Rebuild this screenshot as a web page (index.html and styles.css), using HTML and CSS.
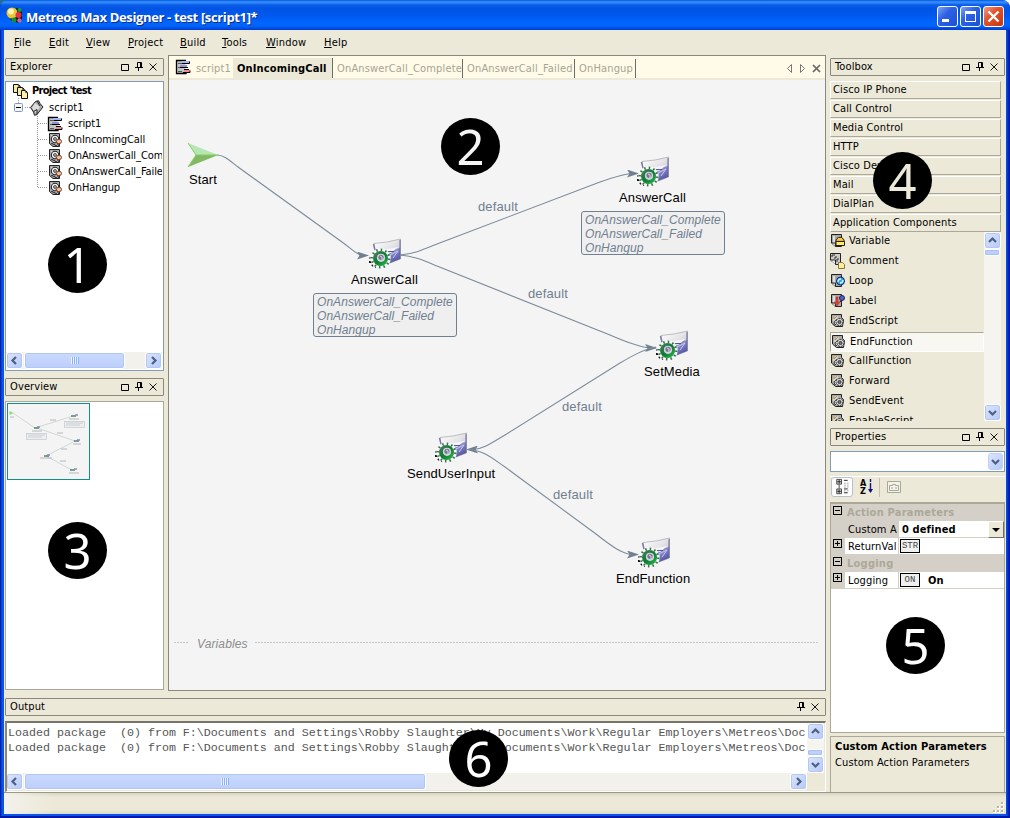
FILE: index.html
```html
<!DOCTYPE html>
<html lang="en">
<head>
<meta charset="utf-8">
<title>Metreos Max Designer - test [script1]*</title>
<link rel="stylesheet" href="styles.css">
</head>
<body>
<svg class="defs" width="0" height="0" aria-hidden="true">
  <defs>
    <linearGradient id="card" x1="0" y1="0" x2="1" y2="1"><stop offset="0" stop-color="#fff"/><stop offset=".5" stop-color="#e4e4e8"/><stop offset="1" stop-color="#aaa"/></linearGradient>
    <linearGradient id="blue" x1="0" y1="0" x2="1" y2="1"><stop offset="0" stop-color="#d5d5f2"/><stop offset=".6" stop-color="#7c7cc4"/><stop offset="1" stop-color="#3f3f92"/></linearGradient>
    <linearGradient id="gear" x1="0" y1="0" x2="1" y2="1"><stop offset="0" stop-color="#4f7f62"/><stop offset=".5" stop-color="#0d7a33"/><stop offset="1" stop-color="#2cc04c"/></linearGradient>
    <symbol id="i-action" viewBox="0 0 34 34">
      <path d="M6 7.500Q20 6.500 32.500 3V23L22 27H8z" fill="url(#card)" stroke="#999" stroke-width=".6"/>
      <path d="M8 16Q20 15.500 32 12V23L22 27 8 24z" fill="url(#blue)"/>
      <path d="M9 14Q22 13 31 10.500L23 17z" fill="#f4f4fb"/><path d="M14 15.500h12" stroke="#55559c"/><path d="M22 19l8-4-5 7" stroke="#c9c9ee" fill="none"/>
      <path d="M32 4V23" fill="none" stroke="#66669a"/>
      <path d="M5.500 8L7.500 16" stroke="#7777aa" stroke-width="1.400"/>
      <path d="M1.500 22h3M1 26h4M4 30l2-2M8 32v-3M12 32l-1-3" stroke="#111" stroke-width="2"/>
      <circle cx="12.500" cy="22.500" r="8.700" fill="none" stroke="#f5fbf5" stroke-width="3.200"/>
      <circle cx="12.500" cy="22.500" r="8.700" fill="none" stroke="#3c6e4d" stroke-width="2.600" stroke-dasharray="1.500 3.050"/>
      <circle cx="12.500" cy="22.500" r="7.500" fill="url(#gear)"/>
      <circle cx="13" cy="21.800" r="4.100" fill="#d4d4de"/><circle cx="13" cy="21.300" r="2.600" fill="#777795"/><path d="M12 20l2 1v3" stroke="#ddd" fill="none"/>
    </symbol>
    <symbol id="i-form" viewBox="0 0 16 16">
      <path d="M1.500 1.500h9v13h-9z" fill="#c4c4c4"/>
      <path d="M11 1.500H1.500v13H11v-1" fill="none" stroke="#000" stroke-width="1.300"/>
      <path d="M3 4h3v1H3zM3 8h4v1H3zM3 12h4v1H3z" fill="#555"/>
      <path d="M6.500 2h8v2.500h-8z" fill="#9db7f4"/><path d="M6.500 4.500h8V2.500" fill="none" stroke="#000"/>
      <path d="M5 6h7v2H5z" fill="#8f8fdc"/><path d="M5 8.500h8" stroke="#000"/>
      <path d="M9 10.500h5" stroke="#000"/><path d="M9 11h6v2H9z" fill="#f18b96"/><path d="M8 13.500h7V11.500" fill="none" stroke="#000"/>
    </symbol>
    <symbol id="i-func" viewBox="0 0 16 16">
      <path d="M2.500 1.500h10v13H6l-3.500-3z" fill="#aaa" stroke="#222"/><path d="M4 3h7v8H4z" fill="#ddd"/>
      <circle cx="8" cy="7" r="3.700" fill="#eee" stroke="#222" stroke-width="1.100"/><circle cx="8" cy="7" r="1.500" fill="#aaa" stroke="#433" stroke-width=".8"/>
      <path d="M9 9l3 5M4 11l6 3" stroke="#222"/><ellipse cx="12" cy="9.500" rx="2.500" ry="2.200" fill="#ffc18a" stroke="#744"/>
    </symbol>
    <symbol id="i-script" viewBox="0 0 16 16">
      <path d="M6.500 1.500l3-.8 1.500 2.800 3 3.500-6 7.500-2.500.8-1-3.300L1.500 7.500z" fill="#aaa" stroke="#222"/><path d="M6 3l5 4-4 6-4-5z" fill="#ddd"/><path d="M8 1l3 5M4.500 11.500L8 9.500v5" stroke="#222" fill="none"/>
    </symbol>
    <symbol id="i-project" viewBox="0 0 17 17">
      <g fill="#f4eaa4" stroke="#111"><path d="M1.500 1.500h5l2 2v6h-7z"/><path d="M5.500 4.500h5l2 2v6h-7z"/><path d="M9.500 7.500h4l2 2v6h-6z" fill="#fff2a8"/></g><path d="M6.500 1.500v2h2M10.500 4.500v2h2M13.500 7.500v2h2" stroke="#555" fill="none"/>
    </symbol>
    <symbol id="i-doc" viewBox="0 0 16 16">
      <path d="M1.500 1.500h10v12h-6l-4-3.500z" fill="#aaa" stroke="#222"/><path d="M3 3h2v7H3z" fill="#ddd"/><path d="M1.500 10h4v3.500" fill="#ddd" stroke="#222"/>
    </symbol>
    <symbol id="i-variable" viewBox="0 0 16 16"><use href="#i-doc"/><circle cx="10" cy="8.500" r="4.200" fill="#f6b21c" stroke="#222"/><path d="M6 8.500h8.500v4H6z" fill="#ffec64" stroke="#222"/><path d="M8 6h4" stroke="#ffe27b"/></symbol>
    <symbol id="i-comment" viewBox="0 0 16 16"><path d="M.5.500h10v11H6L.5 7z" fill="#ccc" stroke="#222"/><path d="M2 4V2h3M5 6V4h2M7 9V6h2" fill="none" stroke="#333"/><path d="M.5 7h5v4.500" fill="#eee" stroke="#222"/><path d="M8.500 9.500h4l2 2v4h-6z" fill="#ffeaa2" stroke="#8a7a30"/></symbol>
    <symbol id="i-loop" viewBox="0 0 16 16"><use href="#i-doc"/><circle cx="10.500" cy="8" r="4" fill="#35a8e4" stroke="#127"/><path d="M8 9q0-3 3-3M13 7q0 3-3 3" stroke="#d6f5ff" fill="none" stroke-width="1.300"/></symbol>
    <symbol id="i-label" viewBox="0 0 16 16"><use href="#i-doc"/><path d="M6 4h2v5h2l-3 4-3-4h2z" fill="#dc4030" stroke="#a33" stroke-width=".5"/><path d="M10 9l4-5" stroke="#222"/><circle cx="12" cy="5" r="2.500" fill="#5361cf" stroke="#225"/></symbol>
    <symbol id="i-gear" viewBox="0 0 16 16"><path d="M1.500 1.500h10v3l2 2-1 7h-7l-4-3.500z" fill="#aaa" stroke="#222"/><path d="M3 3h5v5H3z" fill="#d6d2c8"/><path d="M4 3v3l3-3" stroke="#b48c50" fill="none"/><path d="M4 9l3-3 2 2-4 4z" fill="#eee" stroke="#222" stroke-width=".8"/><circle cx="9.500" cy="9" r="3.500" fill="#ddd" stroke="#222" stroke-dasharray="2 1"/><circle cx="9.500" cy="9" r="1.600" fill="#777" stroke="#222" stroke-width=".8"/></symbol>
    <symbol id="i-box" viewBox="0 0 9 9"><path d="M.5 1.500h7v6h-7z" fill="none" stroke="#000"/></symbol>
    <symbol id="i-pin" viewBox="0 0 9 9"><path d="M2.500 5V.5h4V5M0 5.500h8M3.500 6v3M5.500 1v4" fill="none" stroke="#000"/></symbol>
    <symbol id="i-x" viewBox="0 0 9 9"><path d="M.5.500l7 7M7.500.500l-7 7" stroke="#000" fill="none" stroke-width=".9"/></symbol>
    <symbol id="i-left" viewBox="0 0 9 9"><path d="M6 1L2.500 4.500 6 8" fill="none" stroke="#4d6185" stroke-width="2.200"/></symbol>
    <symbol id="i-right" viewBox="0 0 9 9"><path d="M3 1l3.500 3.500L3 8" fill="none" stroke="#4d6185" stroke-width="2.200"/></symbol>
    <symbol id="i-up" viewBox="0 0 9 9"><path d="M1 6l3.500-3.500L8 6" fill="none" stroke="#4d6185" stroke-width="2.200"/></symbol>
    <symbol id="i-down" viewBox="0 0 9 9"><path d="M1 3l3.500 3.500L8 3" fill="none" stroke="#4d6185" stroke-width="2.200"/></symbol>
    <marker id="arrow" viewBox="0 0 12 8" refX="11" refY="4" markerWidth="12" markerHeight="8" markerUnits="userSpaceOnUse" orient="auto"><path d="M0 0L12 4 0 8 2.500 4z" fill="#708090"/></marker>
  </defs>
</svg>

<div class="window">
  <header class="titlebar">
    <svg class="app-icon" viewBox="0 0 17 17"><path d="M1 8l5 6 7 2 3-3V5l-5-4z" fill="#151515"/><circle cx="6" cy="6" r="5.500" fill="#e7c83b"/><circle cx="5" cy="4.500" r="3" fill="#fff3ad"/><circle cx="13.500" cy="3" r="2" fill="#1f9c34"/><circle cx="12.500" cy="8" r="3" fill="#e33142"/><circle cx="8" cy="13" r="2.500" fill="#198c34"/><circle cx="13.500" cy="13.500" r="2.200" fill="#c766a4"/></svg>
    <h1 class="title">Metreos Max Designer - test [script1]*</h1>
    <div class="controls">
      <span class="ctl"><svg viewBox="0 0 21 21"><path d="M5 13h7v3H5z" fill="#fff"/></svg></span>
      <span class="ctl"><svg viewBox="0 0 21 21"><path d="M5 5h11v11H5zM6 8v7h9V8z" fill="#fff" fill-rule="evenodd"/></svg></span>
      <span class="ctl close"><svg viewBox="0 0 21 21"><path d="M5.500 5.500l10 10M15.500 5.500l-10 10" stroke="#fff" stroke-width="2.400"/></svg></span>
    </div>
  </header>
  <nav class="menubar">
    <span class="menu m-file"><u>F</u>ile</span><span class="menu m-edit"><u>E</u>dit</span><span class="menu m-view"><u>V</u>iew</span><span class="menu m-project"><u>P</u>roject</span><span class="menu m-build"><u>B</u>uild</span><span class="menu m-tools"><u>T</u>ools</span><span class="menu m-window"><u>W</u>indow</span><span class="menu"><u>H</u>elp</span>
  </nav>

  <main class="work">
    <div class="main-side">
      <div class="upper">
        <aside class="left">
          <div class="pane-head"><span>Explorer</span><i class="tools"><svg><use href="#i-box"/></svg><svg><use href="#i-pin"/></svg><svg><use href="#i-x"/></svg></i></div>
          <section class="tree">
            <div class="tree-rows">
              <svg class="tree-lines" viewBox="0 0 60 110"><path d="M12.500 16v5M19 25.500h5M31.500 34v71M32 41.500h10M32 57.500h10M32 73.500h10M32 89.500h10M32 105.500h10" stroke="#999" stroke-dasharray="1 1" fill="none"/><rect x="8.500" y="21.500" width="8" height="8" rx="1" fill="#f5f4ee" stroke="#7b9ac0"/><path d="M10 25.500h5" stroke="#000"/></svg>
              <div class="row root"><svg><use href="#i-project"/></svg><b>Project 'test</b></div>
              <div class="row script"><svg><use href="#i-script"/></svg><span>script1</span></div>
              <div class="row leaf"><svg><use href="#i-form"/></svg><span>script1</span></div>
              <div class="row leaf"><svg><use href="#i-func"/></svg><span>OnIncomingCall</span></div>
              <div class="row leaf"><svg><use href="#i-func"/></svg><span>OnAnswerCall_Com</span></div>
              <div class="row leaf"><svg><use href="#i-func"/></svg><span>OnAnswerCall_Faile</span></div>
              <div class="row leaf"><svg><use href="#i-func"/></svg><span>OnHangup</span></div>
            </div>
            <div class="hscroll"><span class="sbtn"><svg><use href="#i-left"/></svg></span><span class="thumb t-tree"><i class="grip"></i></span><span class="sbtn end"><svg><use href="#i-right"/></svg></span></div>
          </section>
          <div class="pane-head"><span>Overview</span><i class="tools"><svg><use href="#i-box"/></svg><svg><use href="#i-pin"/></svg><svg><use href="#i-x"/></svg></i></div>
          <section class="overview">
            <svg class="mini" viewBox="0 0 81 75">
              <g fill="none" stroke="#c4c8cc" stroke-width=".7"><path d="M5 9L27 24 65 12M29 24L67 37 38 52 64 66"/></g>
              <g fill="#eee" stroke="#b9c4cf" stroke-width=".6"><rect x="18.500" y="29.500" width="20" height="6"/><rect x="56.500" y="17.500" width="20" height="6"/></g>
              <path d="M20 31h17M20 33h14M58 19h17M58 21h14" stroke="#c0c4ca" stroke-width=".8"/>
              <path d="M24 27h10M61 15h10M65 40h8M32 54h12M61 69h10M42 16h6M49 29h6M53 45h6M52 57h6M2 13h4" stroke="#b0b0b4" stroke-width=".9"/>
              <path d="M26 24h5M63 12h5M66 37h5M36 52h5M62 66h5" stroke="#4b8a6a" stroke-width="1.600"/><path d="M29 23h3M67 11h3M69 36h3M39 51h3M66 65h3" stroke="#8a8ab5" stroke-width="1.600"/><path d="M1.500 7l4 2-4 2z" fill="#86dd72"/>
            </svg>
          </section>
        </aside>

        <section class="editor">
          <div class="tabs">
            <svg class="tab-icon"><use href="#i-form"/></svg>
            <span class="tab t1">script1</span><span class="tab active">OnIncomingCall</span><span class="tab t2">OnAnswerCall_Complete</span><span class="tab t3">OnAnswerCall_Failed</span><span class="tab t4">OnHangup</span>
            <svg class="tab-tools" viewBox="0 0 36 10"><path d="M6.500.500v8L2.500 4.500zM15.500.500v8L19.500 4.500z" fill="none" stroke="#777"/><path d="M28 1l7 7M35 1L28 8" stroke="#666" stroke-width="1.700"/></svg>
          </div>
          <div class="canvas">
            <svg class="edges" viewBox="169 80 656 610">
              <g fill="none" stroke="#7c8b9b" stroke-width="1.100" marker-end="url(#arrow)">
                <path d="M217 155C224 155 230 161 238 167L342 242C352 249 357 255 362 255.500H368"/>
                <path d="M400 255C414 254 425 249 437 244L600 182C614 177 624 174 632 173.500H638"/>
                <path d="M400 255C414 256 425 261 437 266L610 335C626 342 640 347 650 348H656"/>
                <path d="M656 347C644 349 632 356 620 363L505 435C490 444 483 449 473 449.500H467"/>
                <path d="M467 449.500C484 450 492 458 505 467L596 534C610 545 622 554 632 554.500H638"/>
              </g>
              <path d="M188 143L218 155 188 167 196 155z" fill="#b6e6b2"/><path d="M196 155h22l-30 12z" fill="#83b964"/><path d="M188 143l8 12-8 12M196 155h22" stroke="#87cf62" fill="none"/>
              <path d="M174 642.500h14M255 642.500h563" stroke="#c5c5c5" stroke-dasharray="2 1"/>
            </svg>
            <!-- nodes sit freely on the diagram surface -->
            <span class="node-name n-start">Start</span>
            <svg class="node a1"><use href="#i-action"/></svg><span class="node-name n1">AnswerCall</span>
            <div class="handlers h1"><span>OnAnswerCall_Complete</span><span>OnAnswerCall_Failed</span><span>OnHangup</span></div>
            <svg class="node a2"><use href="#i-action"/></svg><span class="node-name n2">AnswerCall</span>
            <div class="handlers h2"><span>OnAnswerCall_Complete</span><span>OnAnswerCall_Failed</span><span>OnHangup</span></div>
            <svg class="node a3"><use href="#i-action"/></svg><span class="node-name n3">SetMedia</span>
            <svg class="node a4"><use href="#i-action"/></svg><span class="node-name n4">SendUserInput</span>
            <svg class="node a5"><use href="#i-action"/></svg><span class="node-name n5">EndFunction</span>
            <span class="edge-name e1">default</span><span class="edge-name e2">default</span><span class="edge-name e3">default</span><span class="edge-name e4">default</span>
            <span class="vars">Variables</span>
          </div>
        </section>
      </div>
      <div class="pane-head out-head"><span>Output</span><i class="tools two"><svg><use href="#i-pin"/></svg><svg><use href="#i-x"/></svg></i></div>
      <section class="output">
        <div class="out-main">
          <pre class="log">Loaded package  (0) from F:\Documents and Settings\Robby Slaughter\My Documents\Work\Regular Employers\Metreos\Doc
Loaded package  (0) from F:\Documents and Settings\Robby Slaughter\My Documents\Work\Regular Employers\Metreos\Doc</pre>
          <div class="hscroll"><span class="sbtn"><svg><use href="#i-left"/></svg></span><span class="thumb t-out"><i class="grip"></i></span><span class="sbtn end"><svg><use href="#i-right"/></svg></span></div>
        </div>
        <div class="vscroll v-out"><span class="sbtn"><svg><use href="#i-up"/></svg></span><span class="vthumb"></span><span class="sbtn"><svg><use href="#i-down"/></svg></span></div>
      </section>
    </div>

    <aside class="right">
      <div class="pane-head"><span>Toolbox</span><i class="tools"><svg><use href="#i-box"/></svg><svg><use href="#i-pin"/></svg><svg><use href="#i-x"/></svg></i></div>
      <section class="toolbox">
        <div class="group">Cisco IP Phone</div><div class="group">Call Control</div><div class="group">Media Control</div><div class="group">HTTP</div><div class="group">Cisco DeviceLists</div><div class="group">Mail</div><div class="group">DialPlan</div><div class="group">Application Components</div>
        <div class="items-wrap">
          <div class="items">
            <div class="item"><svg><use href="#i-variable"/></svg>Variable</div>
            <div class="item"><svg><use href="#i-comment"/></svg>Comment</div>
            <div class="item"><svg><use href="#i-loop"/></svg>Loop</div>
            <div class="item"><svg><use href="#i-label"/></svg>Label</div>
            <div class="item"><svg><use href="#i-gear"/></svg>EndScript</div>
            <div class="item sel"><svg><use href="#i-gear"/></svg>EndFunction</div>
            <div class="item"><svg><use href="#i-gear"/></svg>CallFunction</div>
            <div class="item"><svg><use href="#i-gear"/></svg>Forward</div>
            <div class="item"><svg><use href="#i-gear"/></svg>SendEvent</div>
            <div class="item"><svg><use href="#i-gear"/></svg>EnableScript</div>
          </div>
          <div class="vscroll v-items"><span class="sbtn"><svg><use href="#i-up"/></svg></span><span class="vthumb"></span><span class="sbtn end"><svg><use href="#i-down"/></svg></span></div>
        </div>
      </section>
      <div class="pane-head"><span>Properties</span><i class="tools"><svg><use href="#i-box"/></svg><svg><use href="#i-pin"/></svg><svg><use href="#i-x"/></svg></i></div>
      <div class="combo"><span class="sbtn"><svg><use href="#i-down"/></svg></span></div>
      <div class="prop-tools">
        <span class="pt on"><svg viewBox="0 0 22 22"><path d="M5.500 2.500h5v5h-5zM5.500 12.500h5v5h-5zM8 8v4" fill="#e4e4e4" stroke="#444"/><path d="M6 5h4M8 3v4M6 15h4M8 13v4M13 3.500h4M13 12.500h4M13 16.500h4" stroke="#222"/><path d="M13 6.500h2m1 0h2M13 8.500h2m1 0h2M13 10.500h2m1 0h2M13 14.500h2m1 0h2" stroke="#aaa"/></svg></span>
        <span class="pt az"><b>A</b><b>Z</b><svg viewBox="0 0 7 16"><path d="M3.500 0v3M3.500 4v9" stroke="#101080" stroke-width="1.400"/><path d="M1 10h5l-2.500 4z" fill="#101080"/></svg></span>
        <i class="pt-sep"></i>
        <svg class="pt-page" viewBox="0 0 14 12"><path d="M.5.500h13v11H.5z" fill="#f4f2e8" stroke="#aaa899"/><path d="M2.500 4.500h3v-1h3v1h3v5h-9zM4 7h2M8 7h2" fill="none" stroke="#aaa899"/></svg>
      </div>
      <section class="grid">
        <div class="cat"><i class="pm"></i>Action Parameters</div>
        <div class="prop gray"><i class="cell-g"></i><span class="name">Custom A</span><b class="value">0 defined</b><i class="drop"></i></div>
        <div class="prop"><i class="cell-g"><i class="pm plus"></i></i><span class="name">ReturnVal</span><span class="value"><em class="tag">STR</em></span></div>
        <div class="cat"><i class="pm"></i>Logging</div>
        <div class="prop"><i class="cell-g"><i class="pm plus"></i></i><span class="name">Logging</span><span class="value"><em class="tag">ON</em><b>On</b></span></div>
      </section>
      <section class="desc"><b>Custom Action Parameters</b><span>Custom Action Parameters</span></section>
    </aside>
  </main>
  <footer class="status"><svg viewBox="0 0 12 12"><path d="M9 1h3v3H9zM5 5h3v3H5zM9 5h3v3H9zM1 9h3v3H1zM5 9h3v3H5zM9 9h3v3H9z" fill="#fff"/><path d="M9 1h2v2H9zM5 5h2v2H5zM9 5h2v2H9zM1 9h2v2H1zM5 9h2v2H5zM9 9h2v2H9z" fill="#b8b4a2"/></svg></footer>
</div>

<!-- numbered callouts over the window -->
<span class="callout c1">1</span><span class="callout c2">2</span><span class="callout c3">3</span><span class="callout c4">4</span><span class="callout c5">5</span><span class="callout c6">6</span>
</body>
</html>
```

FILE: styles.css
```css
* { box-sizing: border-box; }
body { margin: 0; width: 1010px; height: 818px; overflow: hidden; background: linear-gradient(90deg, #1c6f9c 50%, #fff 50%); font: 11px/14px "DejaVu Sans Condensed", "DejaVu Sans", sans-serif; letter-spacing: .12px; color: #000; position: relative; }
svg { display: block; flex: none; }
.defs { position: absolute; }
i, em { font-style: normal; }

.window { width: 1010px; height: 818px; display: flex; flex-direction: column; padding: 0 4px 4px; border-radius: 8px 8px 0 0; background: linear-gradient(90deg, #0010a0 0, #0855dd 2px, #0855ee 4px, #0855ee 1006px, #0030c8 1008px, #0010a0 1010px); box-shadow: inset 0 -2px #0018a5; }
.titlebar { height: 30px; margin: 0 -4px; padding: 6px 6px 0; display: flex; flex: none; border-radius: 8px 8px 0 0; background: linear-gradient(#0058e0 0, #3a93ff 2px, #0a5ce8 5px, #0054e3 9px, #0058ee 15px, #0066ff 23px, #0064fa 26px, #003dd0 30px); }
.app-icon { width: 17px; height: 17px; margin-top: 1px; }
.title { margin: 3px 0 0 3px; font: bold 13px/17px "Open Sans", "Noto Sans", sans-serif; letter-spacing: -.36px; color: #fff; text-shadow: 1px 1px #0a2a88; white-space: nowrap; }
.controls { display: flex; gap: 2px; margin-left: auto; }
.ctl { width: 21px; height: 21px; border: 1px solid #fff; border-radius: 3px; background: linear-gradient(135deg, #7da4f5, #2e62e4 40%, #1c4fd6); }
.ctl svg { width: 21px; height: 21px; margin: -1px; }
.close { background: linear-gradient(135deg, #f0a08a, #e2532c 40%, #c8350f); }

.menubar { height: 25px; flex: none; background: #ece9d8; padding: 5px 0 0 10px; display: flex; line-height: 15px; }
.menu { white-space: nowrap; letter-spacing: .2px; }
.menu u { text-underline-offset: 1px; }
.m-file { width: 35px; } .m-edit { width: 37px; } .m-view { width: 42px; } .m-project { width: 52px; } .m-build { width: 42px; } .m-tools { width: 44px; } .m-window { width: 58px; }

.work { flex: none; height: 737px; background: #ece9d8; display: flex; gap: 4px; padding-left: 1px; }
.main-side { width: 821px; display: flex; flex-direction: column; }
.upper { display: flex; gap: 4px; height: 636px; flex: none; }
.left { width: 159px; padding-top: 3px; display: flex; flex-direction: column; }
.pane-head { height: 18px; flex: none; border: 1px solid #8a887c; border-radius: 1px; padding-left: 4px; display: flex; align-items: flex-start; line-height: 16px; }
.tools { margin-left: auto; display: flex; gap: 5px; padding: 4px 5px 0 0; }
.tools svg { width: 9px; height: 9px; }
.tools svg:nth-last-child(2) { margin-top: -1px; }

.tree { margin: 5px 0 7px; height: 290px; flex: none; background: #fff; border: 1px solid #7f9db9; display: flex; flex-direction: column; justify-content: space-between; overflow: hidden; padding: 0 1px 1px; }
.tree-rows { position: relative; padding-top: 1px; overflow: hidden; }
.tree-lines { position: absolute; left: -1px; top: 0; width: 60px; height: 110px; }
.row { height: 16px; display: flex; align-items: center; white-space: nowrap; }
.row svg { width: 16px; height: 16px; margin-right: 4px; position: relative; }
.root svg { width: 17px; height: 17px; } .root { padding-left: 5px; } .root b { letter-spacing: -.7px; margin-left: -1px; }
.script { padding-left: 22px; height: 17px; } .leaf { padding-left: 40px; }
.leaf svg { margin-right: 5px; }
.leaf span { letter-spacing: -.08px; }

.hscroll { height: 17px; flex: none; background: #f3f1ec; display: flex; }
.tree .hscroll { margin-left: -1px; }
.sbtn { width: 17px; height: 17px; flex: none; border: 1px solid #fff; border-radius: 3px; box-shadow: inset 0 0 0 1px #b4c8f3; background: linear-gradient(135deg, #dbe5fe, #b6c9f7); padding: 3px; display: block; }
.sbtn svg { width: 9px; height: 9px; }
.end { margin-left: auto; }
.thumb { height: 17px; margin-left: 1px; border: 1px solid #fff; border-radius: 3px; box-shadow: inset 0 0 0 1px #b0c6f3; background: linear-gradient(#cbd9fd, #bccffb); display: flex; align-items: center; justify-content: center; }
.grip { width: 8px; height: 7px; background: repeating-linear-gradient(90deg, #eef4fe 0 1px, #8cb0f8 1px 2px); }
.t-tree { width: 101px; } .t-out { width: 402px; }

.overview { margin-top: 5px; height: 289px; background: #fff; border: 1px solid #aca899; padding: 1px; }
.mini { width: 83px; height: 77px; border: 1px solid #128f8b; background: #f4f4f4; }

.editor { width: 658px; border: 1px solid #8a887c; display: flex; flex-direction: column; }
.tabs { height: 24px; flex: none; background: #fffbe8; border-bottom: 2px solid #ece9d8; padding: 2px 4px 0 6px; display: flex; color: #a7a493; line-height: 20px; white-space: nowrap; }
.tab-icon { width: 16px; height: 16px; margin-top: 1px; }
.tab { height: 19px; padding-left: 4px; border-right: 1px solid #6f6d63; margin-top: 1px; letter-spacing: .16px; }
.t1 { width: 42px; padding-left: 5px; border: 0; }
.active { width: 100px; background: #ece9d8; color: #000; font-weight: bold; height: 20px; margin-top: 0; line-height: 22px; }
.t2 { width: 130px; } .t3 { width: 112px; } .t4 { width: 61px; }
.tab-tools { width: 36px; height: 10px; margin: 6px 0 0 auto; }
.canvas { position: relative; flex: 1; background: #f4f4f4; overflow: hidden; font-family: "Liberation Sans", Arial, sans-serif; }
.edges { width: 656px; height: 610px; }
.node, .node-name, .edge-name, .handlers, .vars { position: absolute; white-space: nowrap; }
.node { width: 34px; height: 34px; }
.a1 { left: 199px; top: 156px; } .a2 { left: 467px; top: 74px; } .a3 { left: 486px; top: 248px; } .a4 { left: 265px; top: 350px; } .a5 { left: 468px; top: 455px; }
.node-name { font-size: 13px; line-height: 16px; letter-spacing: .12px; }
.n-start { left: 20px; top: 92px; } .n1 { left: 182px; top: 192px; } .n2 { left: 450px; top: 110px; } .n3 { left: 475px; top: 284px; } .n4 { left: 238px; top: 386px; } .n5 { left: 447px; top: 491px; }
.edge-name { font-size: 13px; line-height: 16px; color: #708090; }
.e1 { left: 309px; top: 119px; } .e2 { left: 359px; top: 206px; } .e3 { left: 393px; top: 319px; } .e4 { left: 384px; top: 407px; }
.handlers { width: 144px; height: 44px; border: 1px solid #708090; border-radius: 3px; background: #efefef; color: #708090; font: italic 12px/14px "Liberation Sans", Arial, sans-serif; letter-spacing: .05px; padding: 1px 3px; display: flex; flex-direction: column; }
.h1 { left: 144px; top: 213px; } .h2 { left: 412px; top: 131px; }
.vars { left: 28px; top: 556px; font: italic 12px/16px "Liberation Sans", Arial, sans-serif; color: #8c8c8c; }

.out-head { margin-top: 7px; }
.output { margin-top: 5px; height: 71px; flex: none; border: 1px solid #fff; border-top: 2px solid #77756a; border-left: 2px solid #8a887c; display: flex; background: #ece9d8; }
.out-main { width: 800px; height: 67px; display: flex; flex-direction: column; background: #fff; overflow: hidden; }
.out-main .hscroll { margin-left: -1px; }
.log { margin: 0; padding: 3px 0 0 1px; flex: 1; font: 11.67px/15px "Liberation Mono", "Courier New", monospace; letter-spacing: 0; color: #555; }
.vscroll { width: 17px; display: flex; flex-direction: column; background: #f5f4ef; }
.vthumb { width: 16px; height: 7px; border: 1px solid #fff; border-radius: 2px; background: #bdcffb; box-shadow: inset 0 0 0 1px #a8c1f4; }
.v-out { height: 50px; justify-content: space-between; } .v-out .vthumb { margin-top: 8px; }

.right { width: 175px; padding-top: 3px; display: flex; flex-direction: column; }
.toolbox { height: 340px; margin: 5px 0 7px; flex: none; display: flex; flex-direction: column; overflow: hidden; }
.group { width: 171px; height: 18px; margin-bottom: 1px; flex: none; border: 1px solid #fff; border-right-color: #aca899; border-bottom-color: #aca899; padding-left: 2px; line-height: 15px; white-space: nowrap; }
.items-wrap { display: flex; height: 189px; margin-top: -1px; }
.items { width: 154px; overflow: hidden; flex: none; margin-top: -1px; }
.item { height: 20px; display: flex; align-items: center; line-height: 16px; letter-spacing: .17px; }
.item svg { width: 16px; height: 16px; margin-right: 3px; }
.sel { border: 1px solid #aca899; border-right-color: #fff; border-bottom-color: #fff; background: #f8f7f1; margin: 1px 0 -1px; }
.v-items { height: 189px; margin-left: 0; } .v-items .vthumb { margin-top: 0; } .v-items .end { margin: auto 0 0; }
.combo { height: 21px; margin-top: 5px; flex: none; background: #fff; border: 1px solid #7f9db9; padding: 1px; display: flex; justify-content: flex-end; }
.combo .sbtn { width: 15px; padding: 3px 2px; border-color: #c0d0f8; box-shadow: none; }
.prop-tools { height: 26px; margin-top: 4px; flex: none; border-top: 1px solid #fff; display: flex; background: #ece9d8; }
.pt { width: 22px; height: 20px; margin-left: 1px; }
.pt svg { width: 22px; height: 21px; }
.on { border: 1px solid #b7c0cf; background: #fff; border-radius: 3px; } .on svg { margin: -1px; }
.az { position: relative; display: flex; flex-direction: column; padding: 2px 0 0 6px; font: bold 9px/8px "DejaVu Sans Condensed", sans-serif; letter-spacing: 0; }
.az svg { position: absolute; left: 13px; top: 2px; width: 7px; height: 16px; }
.pt-sep { width: 1px; height: 19px; background: #c5c1af; margin: 1px 0 0 3px; }
.pt-page { width: 14px; height: 12px; margin: 4px 0 0 7px; }
.grid { height: 231px; flex: none; background: #fff; border: 1px solid #aca899; border-top-width: 2px; }
.cat { height: 17px; background: #d4d0c8; color: #aca899; font-weight: bold; line-height: 17px; display: flex; gap: 5px; padding-left: 2px; letter-spacing: .24px; }
.pm { width: 9px; height: 9px; margin-top: 2px; border: 1px solid #000; display: block; background: linear-gradient(#000, #000) 1px 3px / 5px 1px no-repeat; flex: none; }
.plus { background: linear-gradient(#000, #000) 1px 3px / 5px 1px no-repeat, linear-gradient(#000, #000) 3px 1px / 1px 5px no-repeat; margin-top: 1px; }
.prop { height: 17px; display: flex; line-height: 17px; border-bottom: 1px solid #d4d0c8; }
.cell-g { width: 14px; background: #d4d0c8; padding: 0 0 0 2px; flex: none; }
.name { width: 54px; padding-left: 3px; overflow: hidden; border-right: 1px solid #d4d0c8; white-space: nowrap; flex: none; }
.gray .name { background: #d4d0c8; }
.value { padding-left: 3px; flex: 1; display: flex; align-items: center; }
.value b { margin-left: 8px; }
.tag { width: 20px; height: 14px; margin-left: -2px; border: 1px solid #000; background: #f0f0f0; color: #444; font: 9px/13px "Liberation Mono", monospace; text-align: center; letter-spacing: 0; }
.drop { width: 16px; height: 17px; border: 1px solid #fff; border-right-color: #716f64; border-bottom-color: #716f64; background: #ece9d8; display: flex; align-items: center; justify-content: center; }
.drop::after { content: ""; border: 4px solid transparent; border-top-color: #000; border-bottom: 0; }
.desc { margin-top: 3px; height: 56px; flex: none; border: 1px solid #aca899; border-bottom: 0; padding: 2px 4px; display: flex; flex-direction: column; line-height: 16px; white-space: nowrap; }

.status { height: 22px; flex: none; border-top: 1px solid #9b988a; background: linear-gradient(90deg, #f3f1ec, rgba(236,233,216,0) 50px), linear-gradient(#d9d5c2 0, #ece9d8 4px, #ece9d8 17px, #dcd8c5); display: flex; justify-content: flex-end; align-items: flex-end; padding: 0 2px 1px; }
.status svg { width: 12px; height: 12px; }

.callout { position: absolute; width: 59px; height: 57px; border-radius: 50%; background: #000; color: #fff; font: 49px/56px "Noto Sans", "Open Sans", sans-serif; letter-spacing: 0; text-align: center; }
.c1 { left: 48px; top: 236px; } .c2 { left: 441px; top: 118px; color: #f4f4f4; } .c3 { left: 48px; top: 522px; } .c4 { left: 873px; top: 152px; color: #ece9d8; } .c5 { left: 886px; top: 617px; } .c6 { left: 449px; top: 730px; }
```
